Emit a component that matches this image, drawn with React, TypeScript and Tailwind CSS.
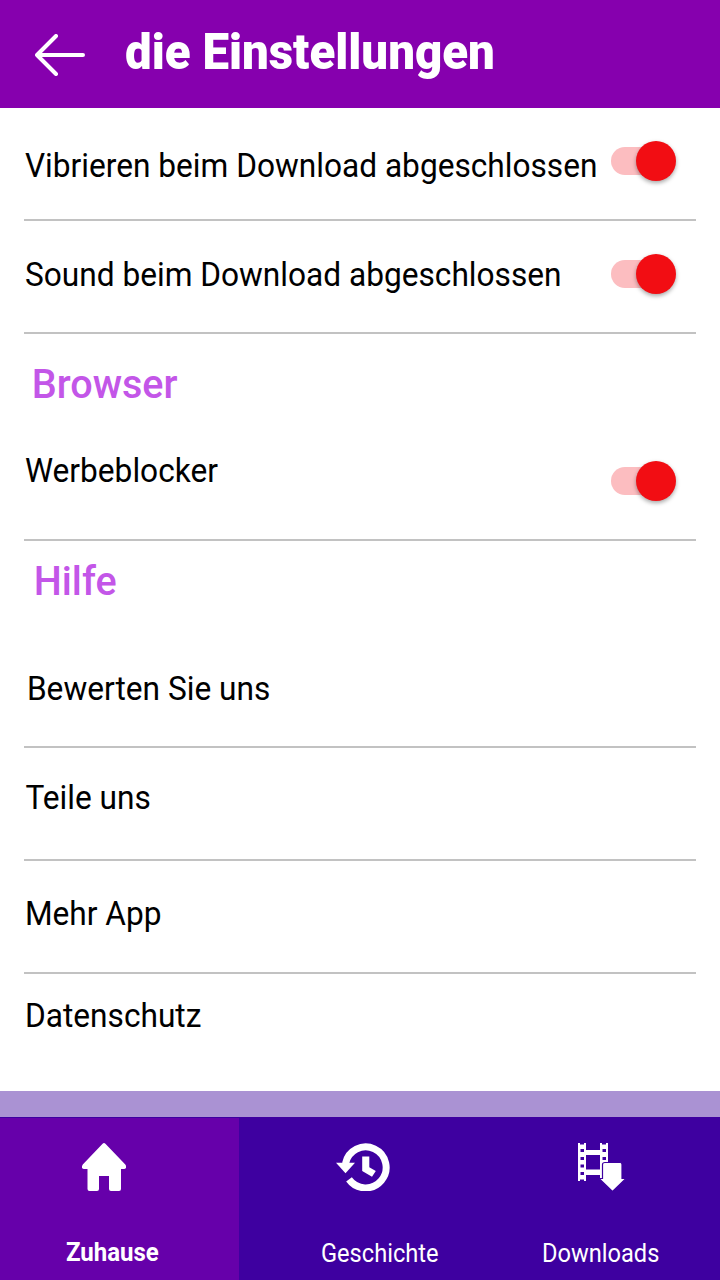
import React, { useState } from 'react';

type Row = {
  id: string;
  label: string;
  labelClass: string;
  toggle?: boolean;
};

const DOWNLOAD_ROWS: Row[] = [
  { id: 'vibrate', label: 'Vibrieren beim Download abgeschlossen', labelClass: 'pt-[38px] pl-px', toggle: true },
  { id: 'sound', label: 'Sound beim Download abgeschlossen', labelClass: 'pt-[34px] pl-px', toggle: true },
];

const BROWSER_ROWS: Row[] = [
  { id: 'adblock', label: 'Werbeblocker', labelClass: 'pt-[23px] pl-px', toggle: true },
];

const HELP_ROWS: Row[] = [
  { id: 'rate', label: 'Bewerten Sie uns', labelClass: 'pt-[34px] pl-[3px]' },
  { id: 'share', label: 'Teile uns', labelClass: 'pt-[30px] pl-[1.5px]' },
  { id: 'more', label: 'Mehr App', labelClass: 'pt-[33px] pl-px' },
  { id: 'privacy', label: 'Datenschutz', labelClass: 'pt-[22px] pl-px' },
];

function Toggle({ on, onChange }: { on: boolean; onChange: () => void }) {
  return (
    <button
      role="switch"
      aria-checked={on}
      onClick={onChange}
      className="mt-[33px] mr-5 flex h-10 w-[65px] items-center"
    >
      <span className={`flex h-7 w-[60px] items-center rounded-full bg-[#fcbdc0] ${on ? 'justify-end' : 'justify-start'}`}>
        <span className={`size-10 shrink-0 rounded-full bg-[#f20d13] shadow-[0_2px_4px_rgba(0,0,0,0.35)] ${on ? '-mr-[5px]' : ''}`} />
      </span>
    </button>
  );
}

function SettingRow({ row, on, onToggle }: { row: Row; on: boolean; onToggle: () => void }) {
  return (
    <div className="flex h-[113px] items-start justify-between border-b-2 border-[#c2c2c2] last:border-transparent">
      <span className={`w-[580px] shrink-0 origin-left scale-x-[0.959] text-[33px] leading-10 whitespace-nowrap text-black ${row.labelClass}`}>
        {row.label}
      </span>
      {row.toggle && <Toggle on={on} onChange={onToggle} />}
    </div>
  );
}

function HomeIcon() {
  return (
    <svg width="44" height="48" viewBox="0 0 44 48" fill="#fff">
      <path d="M20.6 .8Q22 -.6 23.4 .8L43.3 21.5Q44.6 23.2 43.9 25Q43.3 26 42 26H39V46Q39 48 37 48H29Q27 48 27 46V33H17V46Q17 48 15 48H7.5Q5.5 48 5.5 46V26H2Q.7 26 .1 25Q-.4 23.2 .8 21.5Z" />
    </svg>
  );
}

function HistoryIcon() {
  return (
    <svg width="54" height="48" viewBox="0 0 54 48" fill="#fff">
      <path d="M9.5 20.5A20.5 20.5 0 1 1 13 36.4" fill="none" stroke="#fff" strokeWidth="7" />
      <path d="M0 19.8H19L9.5 30.2Z" />
      <path d="M26.2 13.5H33.3V24.3L39.8 28L36 33.7L26.2 28Z" />
    </svg>
  );
}

function DownloadsIcon() {
  return (
    <svg width="48" height="49" viewBox="0 0 48 49" fill="#fff">
      <path
        fillRule="evenodd"
        d="M0 0H2V1.5H6V0H8V7H22V0H24V1.5H28V0H30V36H22V32H8V38H6V36.5H2V38H0ZM8 12V26.5H22V12ZM2.5 6V9H6V6ZM2.5 14V17H6V14ZM2.5 21.5V24.5H6V21.5ZM2.5 29V32H6V29ZM24.5 6V9H28V6ZM24.5 14V17H28V14Z"
      />
      <path
        d="M27 19.5H42Q44 19.5 44 21.5V35.5H48L34.5 48.5L21 35.5H24.5V21.5Q24.5 19.5 27 19.5Z"
        stroke="#3e00a0"
        strokeWidth="1.2"
      />
    </svg>
  );
}

export default function SettingsPage() {
  const [enabled, setEnabled] = useState<Record<string, boolean>>({ vibrate: true, sound: true, adblock: true });

  const renderRow = (row: Row) => (
    <SettingRow
      key={row.id}
      row={row}
      on={!!enabled[row.id]}
      onToggle={() => setEnabled(prev => ({ ...prev, [row.id]: !prev[row.id] }))}
    />
  );

  return (
    <div className="flex h-[1280px] w-[720px] flex-col overflow-hidden bg-white font-[Roboto,sans-serif]">
      <header className="flex h-[108px] shrink-0 items-start bg-[#8600ae]">
        <button className="mt-[34px] ml-[35px] w-[50px]" aria-label="Zurück">
          <svg width="50" height="42" viewBox="0 0 50 42" fill="none" stroke="#fff" strokeWidth="4" strokeLinecap="round" strokeLinejoin="round">
            <path d="M21 2L2 21L21 40M2 21H48" />
          </svg>
        </button>
        <h1 className="mt-[22px] ml-10 origin-left scale-x-[0.949] text-[50px] leading-[60px] font-black whitespace-nowrap text-white">
          die Einstellungen
        </h1>
      </header>

      <main className="h-[983px] shrink-0 overflow-hidden px-6">
        {DOWNLOAD_ROWS.map(renderRow)}
        <h2 className="h-[94px] origin-left scale-x-[0.965] pt-[26px] pl-2 text-[41px] leading-[48px] font-medium text-[#c356e8]">Browser</h2>
        {BROWSER_ROWS.map(renderRow)}
        <h2 className="h-[94px] origin-left scale-x-[0.965] pt-4 pl-2.5 text-[41px] leading-[48px] font-medium text-[#c356e8]">Hilfe</h2>
        {HELP_ROWS.map(renderRow)}
      </main>

      <div className="h-[26px] shrink-0 bg-[#aa92d3]" />

      <nav className="flex h-[163px] shrink-0 bg-[#3e00a0] text-[25px] leading-[30px] text-white">
        <a className="mt-px flex w-[239px] flex-col items-start bg-[#6600aa] pt-[25px] font-bold">
          <span className="pl-[82px]"><HomeIcon /></span>
          <span className="mt-[47px] ml-[65.5px] origin-left scale-x-[0.96]">Zuhause</span>
        </a>
        <a className="flex w-[240px] flex-col items-start pt-[26px]">
          <span className="pl-[96.5px]"><HistoryIcon /></span>
          <span className="mt-[48px] ml-[82px] origin-left scale-x-[0.945]">Geschichte</span>
        </a>
        <a className="flex w-[241px] flex-col items-start pt-[26px]">
          <span className="pl-[99px]"><DownloadsIcon /></span>
          <span className="mt-[47px] ml-[63px] origin-left scale-x-[0.945]">Downloads</span>
        </a>
      </nav>
    </div>
  );
}
